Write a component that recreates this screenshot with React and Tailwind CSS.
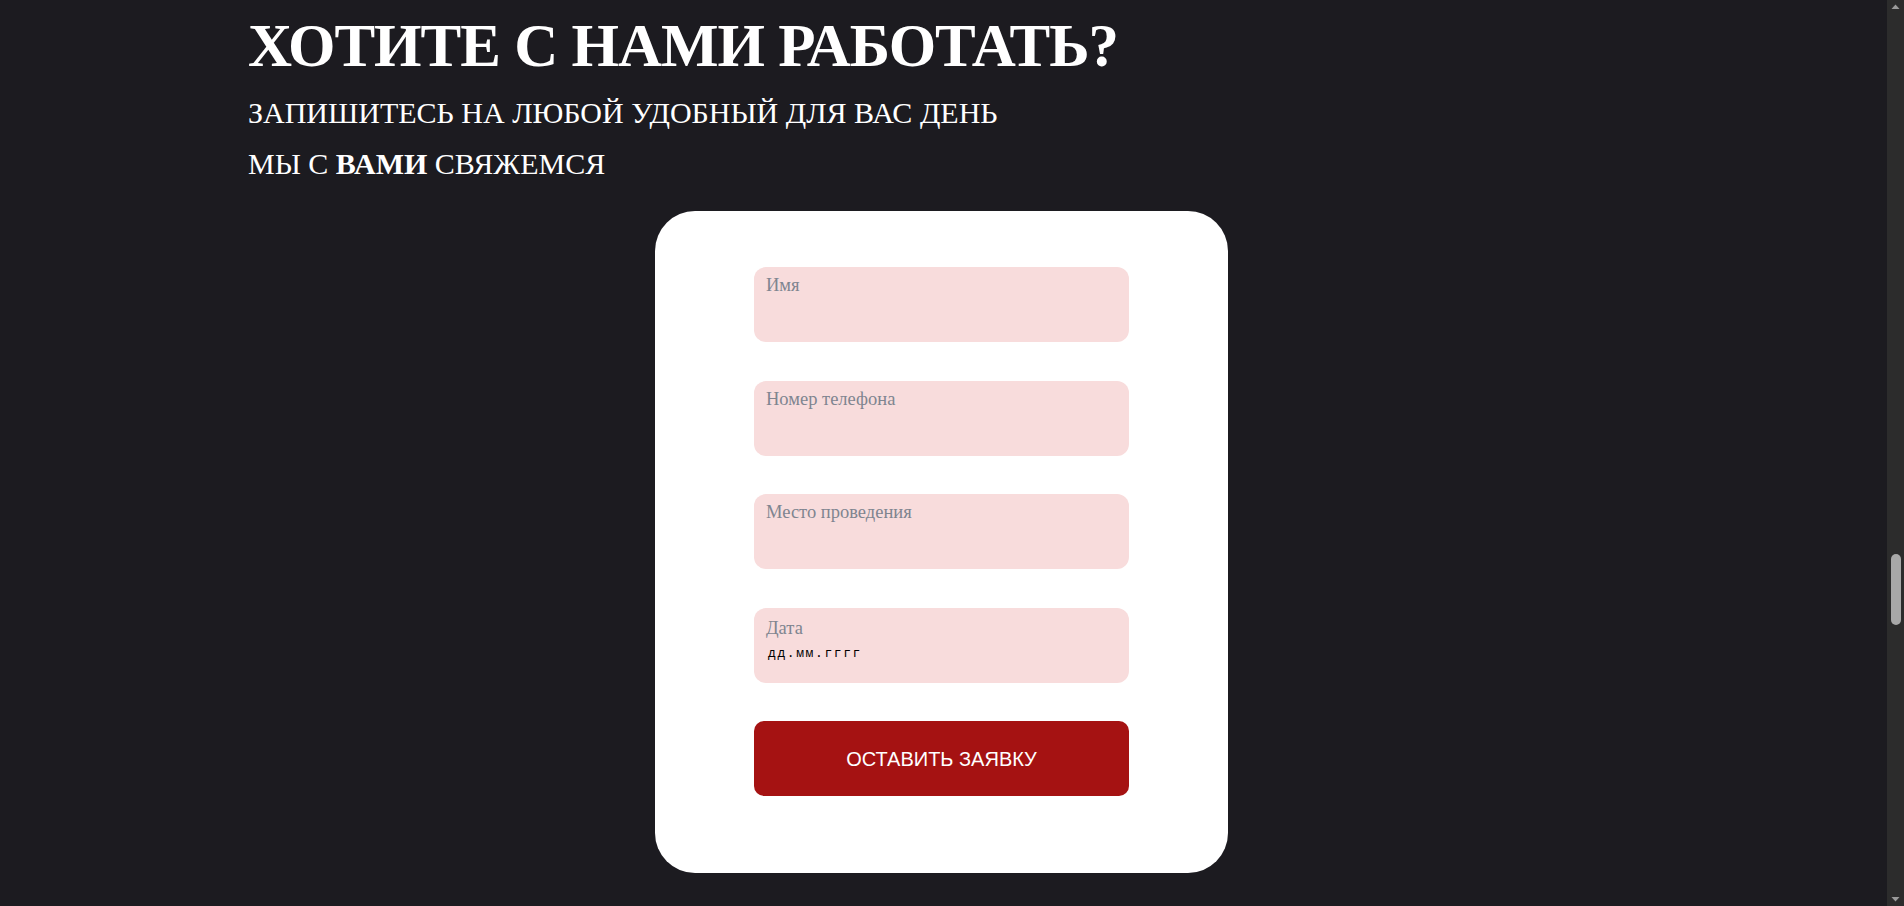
const serif = "font-['Liberation_Serif','Times_New_Roman',serif]";

function Field({ label, children, top = "pt-[8px]" }) {
    return (
        <div className={`h-[75px] w-full rounded-[12px] bg-[#f8dcdc] px-[12px] ${top}`}>
            <div className={`${serif} text-[18.5px] leading-[20px] text-[#7f8590]`}>{label}</div>
            {children}
        </div>
    );
}

function Scrollbar() {
    return (
        <div className="flex h-full w-[17px] shrink-0 flex-col items-center bg-[#2c2c2c]">
            <svg width="17" height="14" viewBox="0 0 17 14" className="shrink-0">
                <path d="M4.5 9 L8.5 4.5 L12.5 9 Z" fill="#9a9a9a" />
            </svg>
            <div className="mt-[540px] h-[71px] w-[10px] rounded-full bg-[#a8a8a8]" />
            <div className="flex-1" />
            <svg width="17" height="14" viewBox="0 0 17 14" className="shrink-0">
                <path d="M4.5 5 L8.5 9.5 L12.5 5 Z" fill="#9a9a9a" />
            </svg>
        </div>
    );
}

export default function App() {
    return (
        <div className="flex h-[906px] w-full overflow-hidden bg-[#1c1b20]">
            <div className="flex-1">
                <div className="mx-auto w-[1391px] pt-[15px]">
                    {/* заголовок */}
                    <div className={`${serif} flex flex-col text-white`}>
                        <h1 className="text-[61px] font-bold leading-[61px] tracking-[-1px]">ХОТИТЕ С НАМИ РАБОТАТЬ?</h1>
                        <p className="mt-[22px] text-[30px] leading-[30px]">ЗАПИШИТЕСЬ НА ЛЮБОЙ УДОБНЫЙ ДЛЯ ВАС ДЕНЬ</p>
                        <p className="mt-[21px] text-[30px] leading-[30px]">
                            МЫ С <b className="font-bold">ВАМИ</b> СВЯЖЕМСЯ
                        </p>
                    </div>

                    {/* форма */}
                    <div className="ml-[407px] mt-[32px] flex w-[573px] flex-col gap-[38.5px] rounded-[40px] bg-white px-[99px] pb-[77px] pt-[56px]">
                        <Field label="Имя" />
                        <Field label="Номер телефона" />
                        <Field label="Место проведения" />
                        <Field label="Дата" top="pt-[10px]">
                            <div className="mt-[9px] pl-[2px] font-['Liberation_Mono','Courier_New',monospace] text-[13px] leading-[14px] tracking-[1.6px] text-black">
                                дд.мм.гггг
                            </div>
                        </Field>
                        <button className="flex h-[75px] w-full items-center justify-center rounded-[10px] bg-[#a51212] font-['Liberation_Sans',Arial,sans-serif] text-[20px] text-white">
                            ОСТАВИТЬ ЗАЯВКУ
                        </button>
                    </div>
                </div>
            </div>
            <Scrollbar />
        </div>
    );
}
